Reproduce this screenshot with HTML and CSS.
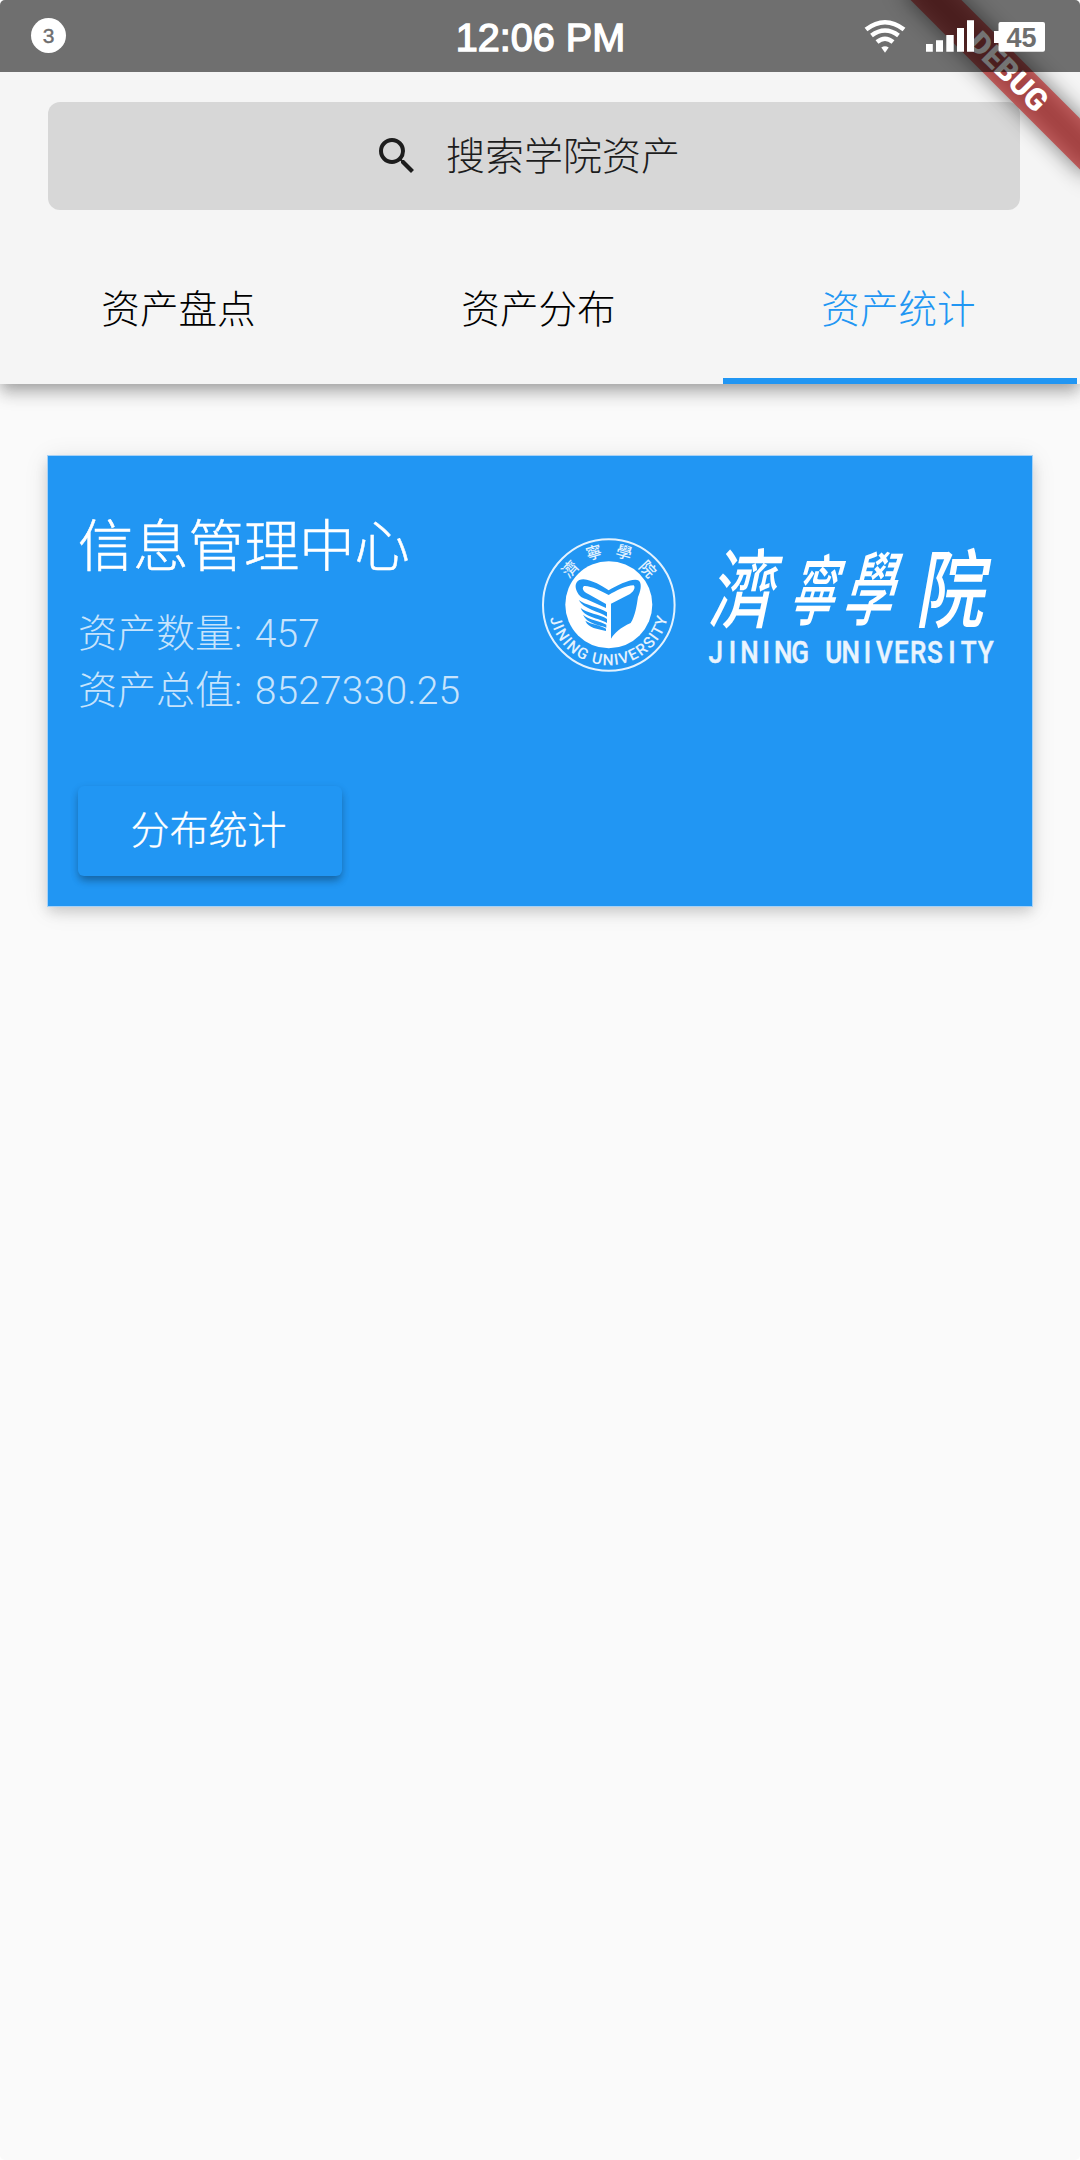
FILE: index.html
```html
<!DOCTYPE html>
<html lang="zh-CN">
<head>
<meta charset="utf-8">
<title>资产统计</title>
<link rel="stylesheet" href="styles.css">
</head>
<body>
<div class="screen">
  <header class="appbar">
    <div class="search">
      <svg class="search-icon" viewBox="0 0 24 24"><path d="M15.5 14h-.79l-.28-.27A6.471 6.471 0 0 0 16 9.5 6.5 6.5 0 1 0 9.5 16c1.61 0 3.09-.59 4.23-1.57l.27.28v.79l5 4.99L20.49 19l-4.99-5zm-6 0C7.01 14 5 11.99 5 9.5S7.01 5 9.5 5 14 7.01 14 9.5 11.99 14 9.5 14z"/></svg>
      <span class="search-text">搜索学院资产</span>
    </div>
    <nav class="tabs">
      <a class="tab">资产盘点</a>
      <a class="tab">资产分布</a>
      <a class="tab tab-active">资产统计</a>
    </nav>
  </header>

  <main class="content">
    <section class="card">
      <div class="card-top">
        <div class="info">
          <h1 class="title">信息管理中心</h1>
          <p class="line">资产数量: <span class="num">457</span></p>
          <p class="line">资产总值: <span class="num">8527330.25</span></p>
        </div>
        <svg class="logo" viewBox="532 530 468 150">
          <defs>
            <path id="ring" d="M548.500 605 A60.300 60.300 0 0 0 669.100 605"/>
          </defs>
          <circle cx="608.8" cy="605" r="65.8" fill="none" stroke="#e4f2fe" stroke-width="2"/>
          <circle cx="608.8" cy="604.7" r="43.5" fill="#fff"/>
          <g transform="translate(520 520) scale(.33333)" fill="#2196f3">
            <path fill-rule="evenodd" d="M266 211C245 198 218 180 190 178C171 178 164 192 168 207C173 224 184 234 198 237L258 264V252L206 223C190 215 184 205 192 198C211 196 243 213 266 225C288 213 318 196 341 196C347 202 342 214 330 222L273 251V356C284 338 300 324 332 309C346 287 350 257 354 231C361 214 367 193 357 182C339 172 294 195 266 211Z"/>
            <path d="M176 240C196 256 238 261 261 277V290C237 274 190 267 176 240ZM182 264C200 280 240 282 261 297V309C236 294 191 291 182 264ZM189 284C206 299 240 303 259 314V323C236 313 201 312 189 284ZM196 302C214 314 240 314 258 326V333C232 325 206 326 196 302Z"/>
          </g>
          <g class="ring-cjk">
            <text transform="translate(574.500 573) rotate(-47)">濟</text>
            <text transform="translate(595.500 558) rotate(-16)">寧</text>
            <text transform="translate(622.500 558) rotate(16)">學</text>
            <text transform="translate(643.500 573) rotate(47)">院</text>
          </g>
          <text class="ring-latin"><textPath href="#ring" startOffset="13" textLength="163">JINING UNIVERSITY</textPath></text>
          <g class="script">
            <text transform="translate(708 621) skewX(-12) scale(.98 1.3)" font-size="66">濟</text>
            <text transform="translate(787 619) skewX(-16) scale(.74 1.24)" font-size="62">寧</text>
            <text transform="translate(841 619) skewX(-16) scale(.8 1.3)" font-size="62">學</text>
            <text transform="translate(915 621) skewX(-10) scale(1.04 1.3)" font-size="66">院</text>
          </g>
          <text class="latin" transform="scale(.84 1)" y="663" x="852 872.080 892.170 912.250 932.330 952.420 972.500 992.580 1012.670 1032.750 1052.830 1072.920 1093 1113.080 1133.170 1153.250 1173.330">JINING UNIVERSITY</text>
        </svg>
      </div>
      <button class="button">分布统计</button>
    </section>
  </main>

  <div class="banner"><div class="ribbon"><span>DEBUG</span></div></div>

  <div class="statusbar">
    <span class="badge">3</span>
    <span class="time">12:06 PM</span>
    <div class="indicators">
      <svg class="signals" viewBox="860 14 190 42">
        <g fill="none" stroke="#fff" stroke-width="4.600">
          <path d="M866 28.500Q885 14 904 28.500"/>
          <path d="M871.500 34.500Q885 24.500 898.500 34.500"/>
          <path d="M877 41Q885 34.500 893 41"/>
        </g>
        <path fill="#fff" d="M881.300 46.500Q885 44 888.700 46.500L885 51.700Z"/>
        <path fill="#fff" d="M926 43h6.800v7.700H926zM936 39.300h7v11.400h-7zM946.300 34h7.400v16.700h-7.400zM957 27h7v23.700h-7zM967 19.300h7v31.400h-7z"/>
        <path fill="#fff" d="M994 30h4.500v-7q0-2 2-2H1043q2 0 2 2v25.700q0 2-2 2h-42.500q-2 0-2-2V42H994z"/>
        <text class="battery" x="1006.500" y="45.500">45</text>
      </svg>
    </div>
  </div>
</div>
</body>
</html>
```

FILE: styles.css
```css
* { box-sizing: border-box; }
body { margin: 0; background: #fff; }

.screen {
  position: relative;
  width: 1080px;
  height: 2160px;
  overflow: hidden;
  border-radius: 5px;
  background: #fafafa;
  font-family: Roboto, "Noto Sans CJK SC", sans-serif;
  font-weight: 300;
  font-size: 38.6px;
  color: #000;
}

.appbar {
  position: relative;
  height: 384px;
  padding-top: 102px;
  background: #f5f5f5;
  box-shadow: 0 6px 12px -3px rgba(0,0,0,.2), 0 12px 15px rgba(0,0,0,.14), 0 3px 20px rgba(0,0,0,.1);
}
.search {
  display: flex;
  align-items: center;
  gap: 25px;
  height: 108px;
  margin: 0 60px 0 48px;
  padding-left: 325px;
  border-radius: 12px;
  background: #d7d7d7;
  color: #1d1d1d;
}
.search-icon { width: 48px; height: 48px; fill: #1d1d1d; }
.search-text { font-size: 39px; padding-bottom: 6px; }
.tabs { display: grid; grid-template-columns: repeat(3, 1fr); height: 174px; }
.tab {
  display: flex;
  align-items: center;
  justify-content: center;
  margin: 0 3px;
  padding: 24px 3px 0 0;
  border-bottom: 6px solid transparent;
}
.tab-active { color: #2196f3; border-color: #2196f3; }

.content { padding: 72px 48px 0; }
.card {
  height: 450px;
  padding: 54px 30px 30px;
  background: #2196f3;
  box-shadow: 0 0 0 1px #a6d1f6, 0 6px 12px rgba(0,0,0,.14), 0 3px 24px rgba(0,0,0,.1);
  color: #fff;
}
.card-top { display: flex; justify-content: space-between; height: 276px; }
.title { margin: 2px 0 22px; font-size: 55.3px; font-weight: 300; line-height: 72px; -webkit-text-stroke: .5px #fff; }
.line { margin: 0; font-size: 39px; line-height: 57px; color: rgba(255,255,255,.75); }
.num { margin-left: 3px; letter-spacing: .15px; }
.logo { width: 468px; height: 150px; margin: 20px 2px 0 0; flex: none; overflow: visible; }
.ring-cjk { fill: #e4f2fe; font: 500 16px "Noto Sans CJK TC", sans-serif; text-anchor: middle; }
.ring-latin { fill: #e4f2fe; font: 500 15.5px Roboto, sans-serif; }
.script { fill: #fff; font-family: "Noto Sans CJK TC", sans-serif; font-weight: 500; }
.latin { fill: #e9f4fe; stroke: #e9f4fe; stroke-width: .5px; font: 500 31px Roboto, sans-serif; text-anchor: middle; }
.button {
  display: block;
  width: 264px;
  height: 90px;
  padding: 0 3px 8px 0;
  border: 0;
  border-radius: 6px;
  background: #2196f3;
  box-shadow: 0 6px 8px -2px rgba(0,0,0,.25), 0 3px 9px rgba(0,0,0,.14);
  color: #fff;
  font: inherit;
  font-size: 39px;
  -webkit-text-stroke: .3px #fff;
}

.banner {
  position: absolute;
  top: 0;
  right: 0;
  width: 300px;
  height: 300px;
  overflow: hidden;
}
.ribbon {
  position: absolute;
  left: 98px;
  top: 54px;
  width: 260px;
  height: 36px;
  transform: rotate(45deg);
  display: flex;
  align-items: center;
  justify-content: center;
  color: #fff;
  font-size: 30.6px;
  font-weight: 900;
}
.ribbon::before, .ribbon::after { content: ""; position: absolute; inset: 0; }
.ribbon::before { background: rgba(0,0,0,.5); filter: blur(11px); }
.ribbon::after { background: rgba(183,28,28,.627); }
.ribbon span { position: relative; z-index: 1; margin-bottom: 1px; }

.statusbar {
  position: absolute;
  top: 0;
  left: 0;
  width: 1080px;
  height: 72px;
  display: grid;
  grid-template-columns: 1fr auto 1fr;
  align-items: center;
  padding: 0 30px 0 31px;
  background: rgba(0,0,0,.55);
  font-family: "Liberation Sans", Arial, sans-serif;
  color: #fff;
}
.badge {
  width: 35px;
  height: 35px;
  margin-top: -2px;
  border-radius: 50%;
  background: #fff;
  color: #6e6e6e;
  font-size: 21px;
  font-weight: 400;
  line-height: 36px;
  text-align: center;
  -webkit-text-stroke: .4px #6e6e6e;
}
.time { font-size: 39.6px; font-weight: 400; line-height: 72px; padding-top: 1px; -webkit-text-stroke: 1.4px #fff; }
.indicators { display: flex; justify-content: flex-end; }
.signals { width: 190px; height: 42px; margin-top: -2px; overflow: visible; }
.battery { fill: #6e6e6e; font: 700 27px "Liberation Sans", Arial, sans-serif; }
```
